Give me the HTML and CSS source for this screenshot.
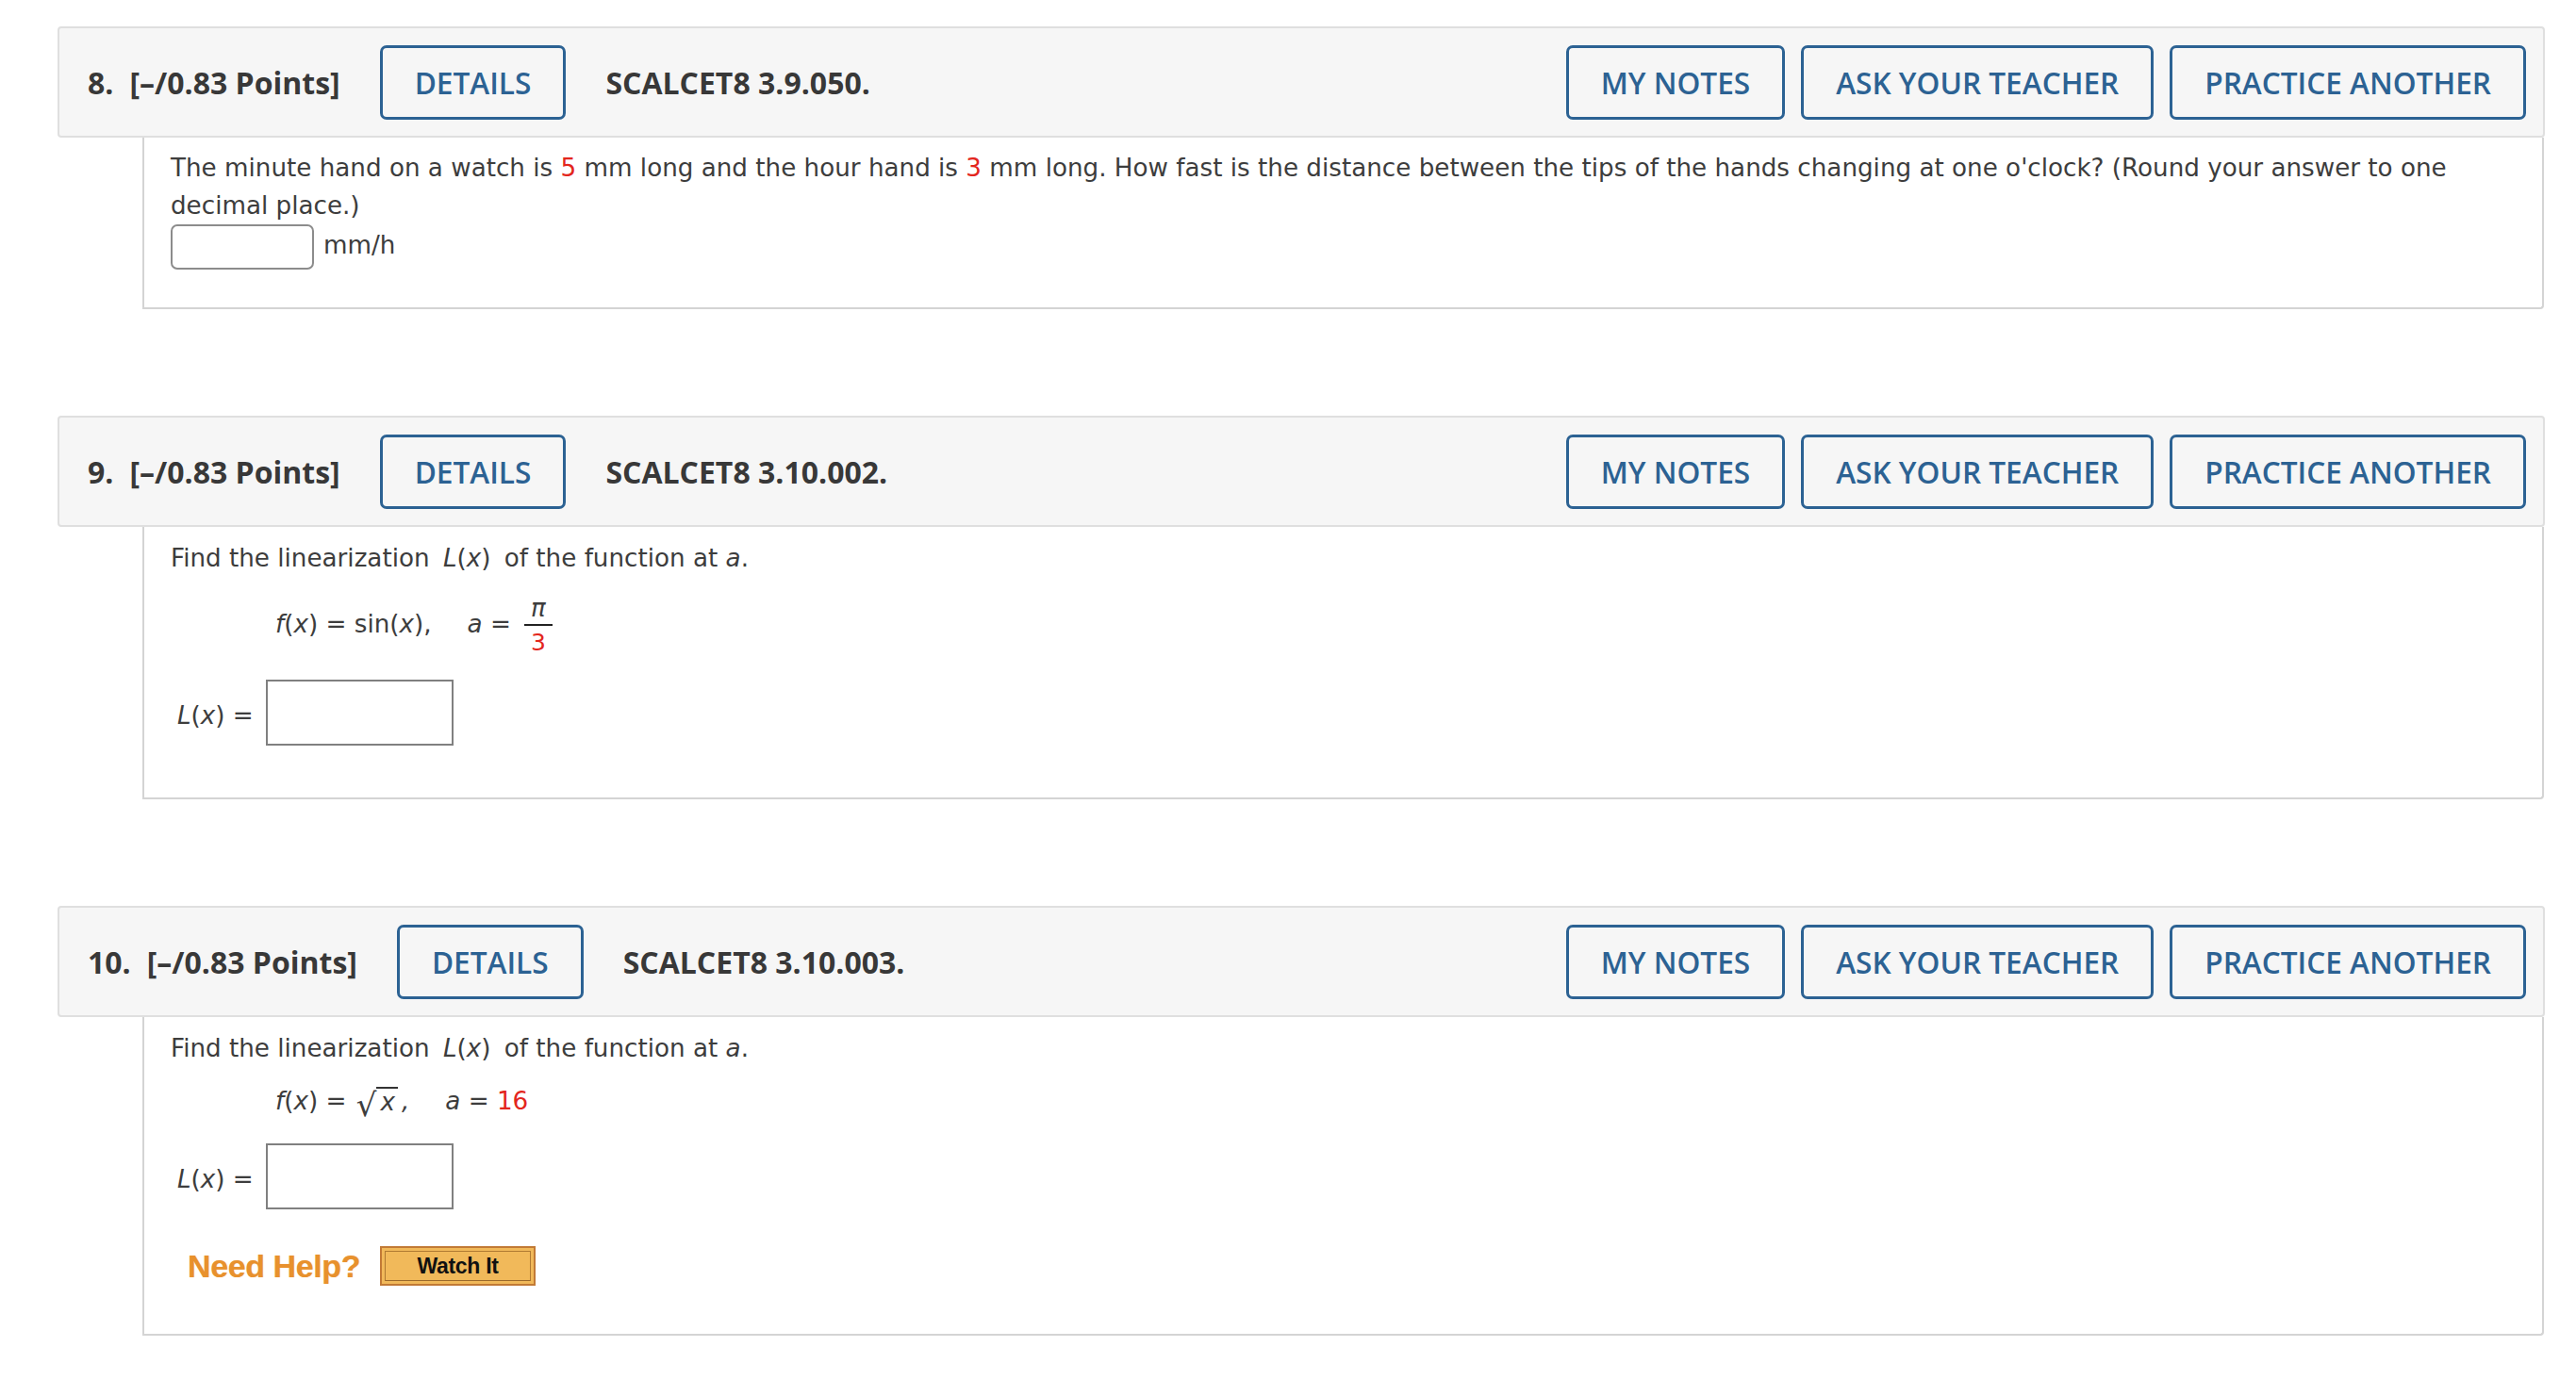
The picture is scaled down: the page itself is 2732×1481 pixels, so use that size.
FILE: index.html
```html
<!DOCTYPE html>
<html lang="en">
<head>
<meta charset="utf-8">
<title>Questions</title>
<link rel="stylesheet" href="styles.css">
</head>
<body>
<div class="page">

  <section class="question">
    <div class="qhead">
      <span class="qnum">8.</span>
      <span class="qpts">[–/0.83 Points]</span>
      <button class="btn">DETAILS</button>
      <span class="qcode">SCALCET8 3.9.050.</span>
      <div class="actions">
        <button class="btn">MY NOTES</button>
        <button class="btn">ASK YOUR TEACHER</button>
        <button class="btn">PRACTICE ANOTHER</button>
      </div>
    </div>
    <div class="qbody q8">
      <p class="text">The minute hand on a watch is <span class="red">5</span> mm long and the hour hand is <span class="red">3</span> mm long. How fast is the distance between the tips of the hands changing at one o'clock? (Round your answer to one decimal place.)</p>
      <div class="answer-row">
        <span class="round-input"></span>
        <span class="unit">mm/h</span>
      </div>
    </div>
  </section>

  <section class="question">
    <div class="qhead">
      <span class="qnum">9.</span>
      <span class="qpts">[–/0.83 Points]</span>
      <button class="btn">DETAILS</button>
      <span class="qcode">SCALCET8 3.10.002.</span>
      <div class="actions">
        <button class="btn">MY NOTES</button>
        <button class="btn">ASK YOUR TEACHER</button>
        <button class="btn">PRACTICE ANOTHER</button>
      </div>
    </div>
    <div class="qbody q9">
      <p class="text">Find the linearization <span class="m"><i>L</i>(<i>x</i>)</span> of the function at <i>a</i>.</p>
      <div class="formula f9">
        <span class="expr"><i>f</i>(<i>x</i>) = sin(<i>x</i>),</span>
        <span class="expr"><i>a</i> =</span>
        <span class="frac"><span class="num"><i>π</i></span><span class="den red">3</span></span>
      </div>
      <div class="lx-row">
        <span class="lx"><i>L</i>(<i>x</i>) =</span>
        <span class="box-input"></span>
      </div>
    </div>
  </section>

  <section class="question">
    <div class="qhead">
      <span class="qnum">10.</span>
      <span class="qpts">[–/0.83 Points]</span>
      <button class="btn">DETAILS</button>
      <span class="qcode">SCALCET8 3.10.003.</span>
      <div class="actions">
        <button class="btn">MY NOTES</button>
        <button class="btn">ASK YOUR TEACHER</button>
        <button class="btn">PRACTICE ANOTHER</button>
      </div>
    </div>
    <div class="qbody q10">
      <p class="text">Find the linearization <span class="m"><i>L</i>(<i>x</i>)</span> of the function at <i>a</i>.</p>
      <div class="formula f10">
        <span class="expr"><i>f</i>(<i>x</i>) = <span class="sqrt"><span class="rad">√</span><span class="radicand"><i>x</i></span></span><i>,</i></span>
        <span class="expr"><i>a</i> = <span class="red">16</span></span>
      </div>
      <div class="lx-row">
        <span class="lx"><i>L</i>(<i>x</i>) =</span>
        <span class="box-input"></span>
      </div>
      <div class="help-row">
        <span class="need-help">Need Help?</span>
        <span class="watch"><span class="watch-inner">Watch It</span></span>
      </div>
    </div>
  </section>

</div>
</body>
</html>
```

FILE: styles.css
```css
html, body {
  margin: 0;
  padding: 0;
  background: #ffffff;
}

.page {
  padding: 28px 33px 0 61px;
}

.question {
  margin-bottom: 113px;
}

.qhead {
  height: 118px;
  box-sizing: border-box;
  display: flex;
  align-items: center;
  background: #f6f6f6;
  border: 2px solid #dfdfdf;
  border-radius: 4px;
  padding: 0 18px 0 30px;
  font-family: "Open Sans", "Liberation Sans", sans-serif;
  color: #383838;
}

.qnum,
.qpts,
.qcode {
  font-weight: 700;
  font-size: 32px;
  white-space: nowrap;
}

.qnum {
  margin-right: 17px;
}

.qpts {
  margin-right: 42px;
}

.qcode {
  margin-left: 42px;
}

.btn {
  height: 79px;
  box-sizing: border-box;
  padding: 0 34px;
  border: 3px solid #2c6293;
  border-radius: 7px;
  background: transparent;
  color: #2c6293;
  font-family: "Open Sans", "Liberation Sans", sans-serif;
  font-weight: 600;
  font-size: 31.6px;
  white-space: nowrap;
  cursor: pointer;
}

.actions {
  margin-left: auto;
  display: flex;
  gap: 17px;
}

.qbody {
  margin: 0 1px 0 90px;
  border: 2px solid #d4d4d4;
  border-top: none;
  border-radius: 0 0 4px 0;
  padding: 0 30px 0 28px;
  font-family: "DejaVu Sans", Verdana, sans-serif;
  font-size: 26.2px;
  color: #3d3d3d;
}

.text {
  margin: 0;
  line-height: 40px;
}

.red {
  color: #e3261d;
}

.m {
  margin: 0 6px;
}

i {
  font-style: oblique;
}

/* Q8 */
.q8 {
  padding-top: 12px;
  padding-bottom: 40px;
}

.answer-row {
  display: flex;
  align-items: center;
  height: 48px;
}

.round-input {
  width: 152px;
  height: 48px;
  box-sizing: border-box;
  border: 2px solid #8c8c8c;
  border-radius: 7px;
  background: #fff;
  margin-right: 10px;
}

.unit {
  line-height: 40px;
  padding-bottom: 4px;
}

/* formulas */
.formula {
  display: flex;
  align-items: center;
  margin-left: 111px;
  gap: 38px;
  line-height: 40px;
  white-space: nowrap;
}

.f9 {
  margin-top: 16px;
}

.f10 {
  margin-top: 16px;
  height: 40px;
}

.frac {
  display: inline-flex;
  flex-direction: column;
  align-items: center;
  margin-left: -24px;
}

.frac .num {
  line-height: 34px;
  padding: 0 6px;
  font-size: 26px;
}

.frac .den {
  line-height: 28px;
  padding: 4px 7px 0;
  font-size: 25px;
  border-top: 2px solid #222;
}

.sqrt {
  display: inline-flex;
  align-items: flex-end;
  margin: 0 4px 0 2px;
  height: 40px;
  vertical-align: top;
}

.rad {
  font-size: 34px;
  line-height: 40px;
  margin-bottom: -4px;
}

.radicand {
  border-top: 2px solid #333;
  line-height: 28px;
  padding: 0 3px 0 4px;
  margin-bottom: 5px;
}

/* L(x) row */
.lx-row {
  display: flex;
  align-items: center;
  margin-top: 25px;
}

.lx {
  margin-left: 7px;
  margin-right: 13px;
  line-height: 40px;
  padding-top: 6px;
}

.box-input {
  width: 199px;
  height: 70px;
  box-sizing: border-box;
  border: 2px solid #808080;
  background: #fff;
}

.q9 {
  padding-top: 13px;
  padding-bottom: 55px;
}

.q10 {
  padding-top: 13px;
  padding-bottom: 51px;
}

/* Need help */
.help-row {
  display: flex;
  align-items: center;
  margin-top: 39px;
  height: 42px;
  padding-left: 18px;
}

.need-help {
  font-family: "Liberation Sans", Arial, sans-serif;
  font-weight: 700;
  font-size: 34px;
  color: #e8912d;
  text-shadow: 0 0 1px rgba(232, 145, 45, 0.6);
  margin-right: 21px;
  letter-spacing: -0.4px;
}

.watch {
  width: 165px;
  height: 42px;
  box-sizing: border-box;
  border: 2px solid #c27a36;
  background: #f1b95a;
  padding: 3px;
  display: flex;
}

.watch-inner {
  flex: 1;
  border: 1px solid #b07a33;
  border-bottom-color: #9c6a2c;
  display: flex;
  align-items: center;
  justify-content: center;
  font-family: "Liberation Sans", Arial, sans-serif;
  font-weight: 700;
  font-size: 23px;
  color: #111;
  letter-spacing: -0.3px;
}
```
